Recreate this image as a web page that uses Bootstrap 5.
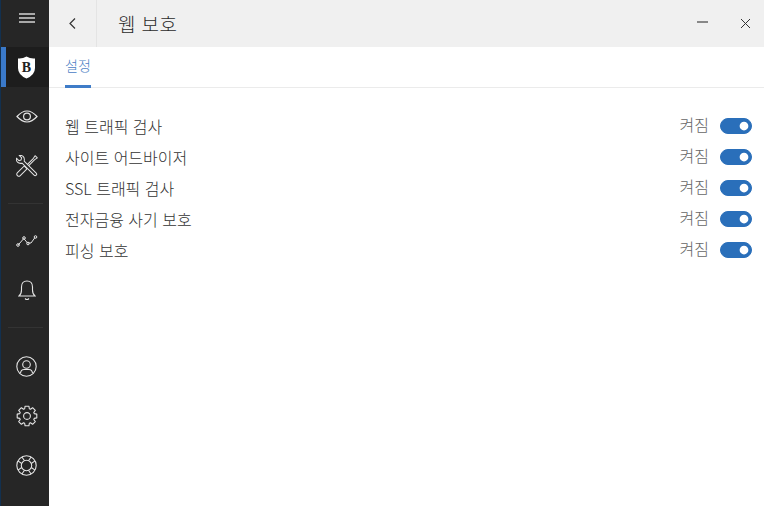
<!DOCTYPE html>
<html lang="ko">
<head>
<meta charset="utf-8">
<link href="https://cdn.jsdelivr.net/npm/bootstrap@5.3.0/dist/css/bootstrap.min.css" rel="stylesheet">
<script src="https://cdn.jsdelivr.net/npm/bootstrap@5.3.0/dist/js/bootstrap.bundle.min.js"></script>
<style>
    html, body { height: 100%; overflow: hidden; }
    body { font-family: "Noto Sans CJK KR", "Liberation Sans", sans-serif; font-weight: 300; color: #333; background: #fff; }
    .app-shell { height: 506px; }
    .side-rail { width: 49px; background: #262626; border-left: 1px solid #12304f; flex-shrink: 0; }
    .rail-item { height: 40px; color: #e4e4e4; position: relative; padding-left: 3px; flex-shrink: 0; }
    .rail-item svg { display: block; }
    .rail-top { height: 47px; padding-top: 13px; }
    .rail-active { background: #1d1d1d; }
    .rail-active::before { content: ""; position: absolute; left: 0; top: 0; bottom: 0; width: 5px; background: #3a79c9; }
    .rail-rule { height: 1px; background: #333; margin: 17px 6px 17px 7px; flex-shrink: 0; }
    .rail-rule-low { margin-bottom: 18px; }
    .gap-nine { margin-top: 9px; }
    .gap-ten { margin-top: 10px; }
    .head-bar { height: 47px; background: #f0f0f0; }
    .back-btn { width: 48px; height: 47px; border-right: 1px solid #e4e4e4; color: #333; }
    .page-title { font-size: 19px; margin-left: 21px; letter-spacing: .4px; color: #2b2b2b; line-height: 44px; }
    .win-btn { height: 47px; color: #333; }
    .win-min { width: 44px; margin-right: 3px; }
    .win-close { width: 37px; }
    .tab-strip { height: 41px; border-bottom: 1px solid #ebebeb; padding-left: 16px; }
    .tab-on { font-size: 14px; color: #4a80c4; height: 41px; width: 26px; border-bottom: 3px solid #3f7cc8; line-height: 36px; white-space: nowrap; margin-bottom: -1px; }
    .opt-list { padding: 22px 12px 0 16px; }
    .opt-row { height: 31px; font-size: 16px; color: #333; }
    .opt-state { font-size: 16px; color: #666; margin-right: 11px; margin-top: -4px; }
    .opt-row .form-check { min-height: 0; padding: 0; margin: 0; }
    .opt-row .form-check-input { width: 32px; height: 16px; margin: 0; float: none; display: block; background-color: #2a6fba; border-color: #2a6fba; box-shadow: none; }
    .opt-row .form-check-input:checked { background-image: url("data:image/svg+xml,%3csvg xmlns='http://www.w3.org/2000/svg' viewBox='-4 -4 8 8'%3e%3ccircle r='2.5' fill='%23fff'/%3e%3c/svg%3e"); }
</style>
</head>
<body>
<div class="app-shell d-flex">
    <nav class="side-rail d-flex flex-column">
        <div class="rail-item rail-top d-flex justify-content-center">
            <svg width="16" height="10" viewBox="0 0 16 10" fill="#a8a8a8"><rect y="0" width="16" height="2"/><rect y="4" width="16" height="2"/><rect y="8" width="16" height="2"/></svg>
        </div>
        <div class="rail-item rail-active d-flex align-items-center justify-content-center">
            <svg width="19" height="23" viewBox="0 0 19 23"><path d="M1 2.500 Q5.500 3 9.500 .5 Q13.500 3 18 2.500 V12 Q18 19 9.500 22.500 Q1 19 1 12 Z" fill="#fff"/><text x="9.500" y="16" text-anchor="middle" font-family="Liberation Serif" font-weight="700" font-size="14" fill="#222">B</text></svg>
        </div>
        <div class="rail-item gap-nine d-flex align-items-center justify-content-center">
            <svg width="22" height="15" viewBox="0 0 22 15" fill="none" stroke="currentColor" stroke-width="1.200"><path d="M1 7.500 Q11 -3.500 21 7.500 Q11 18.500 1 7.500 Z"/><circle cx="11" cy="7.500" r="3.400"/></svg>
        </div>
        <div class="rail-item gap-ten d-flex align-items-center justify-content-center">
            <svg width="22" height="22" viewBox="-11 -11 22 22" stroke="currentColor" stroke-width="1" stroke-linejoin="round">
                <g transform="rotate(45)" fill="none"><path d="M-.9 2 V-10 L-1.600 -13 H1.600 L.9 -10 V2"/><path d="M-2 2 H2 V11.500 A2 2 0 0 1 -2 11.500 Z"/></g>
                <g transform="rotate(-45)" fill="#262626"><path d="M-1.500 -5.500 Q-4 -7 -4 -9.500 Q-4 -11.500 -2 -13 V-9.500 L0 -8.500 L2 -9.500 V-13 Q4 -11.500 4 -9.500 Q4 -7 1.500 -5.500 V11.500 A1.500 1.500 0 0 1 -1.500 11.500 Z"/></g>
            </svg>
        </div>
        <div class="rail-rule"></div>
        <div class="rail-item d-flex align-items-center justify-content-center">
            <svg width="22" height="12" viewBox="0 0 22 12" fill="none" stroke="currentColor" stroke-width="1"><path d="M2.200 10 L7.800 3.500 L11.500 8 L15 8 L19 2.500"/><circle cx="2" cy="10" r="1.300"/><circle cx="8" cy="3" r="1.300"/><circle cx="12" cy="8.500" r="1.300"/><circle cx="19.500" cy="2" r="1.300"/></svg>
        </div>
        <div class="rail-item gap-nine d-flex align-items-center justify-content-center">
            <svg width="18" height="22" viewBox="0 0 18 22" fill="none" stroke="currentColor" stroke-width="1.100"><path d="M1 17 H17 Q14.500 15 14.500 11 V8 Q14.500 2 9 2 Q3.500 2 3.500 8 V11 Q3.500 15 1 17 Z"/><path d="M7 19.500 Q9 21.500 11 19.500"/></svg>
        </div>
        <div class="rail-rule rail-rule-low"></div>
        <div class="rail-item d-flex align-items-center justify-content-center">
            <svg width="21" height="21" viewBox="0 0 21 21" fill="none" stroke="currentColor" stroke-width="1.100"><circle cx="10.500" cy="10.500" r="9.700"/><circle cx="10.500" cy="8.500" r="3.800"/><path d="M4.500 17 Q5 13.500 8 13.500 H13 Q16 13.500 16.500 17"/></svg>
        </div>
        <div class="rail-item gap-ten d-flex align-items-center justify-content-center">
            <svg width="22" height="22" viewBox="-11 -11 22 22" fill="none" stroke="currentColor" stroke-width="1.100" stroke-linejoin="round"><path d="M-1.900 -9.800 L1.900 -9.800 L2.350 -7.230 L3.450 -6.770 L5.600 -8.300 L8.300 -5.600 L6.770 -3.450 L7.230 -2.350 L9.800 -1.900 L9.800 1.900 L7.230 2.350 L6.770 3.450 L8.300 5.600 L5.600 8.300 L3.450 6.770 L2.350 7.230 L1.900 9.800 L-1.900 9.800 L-2.350 7.230 L-3.450 6.770 L-5.600 8.300 L-8.300 5.600 L-6.770 3.450 L-7.230 2.350 L-9.800 1.900 L-9.800 -1.900 L-7.230 -2.350 L-6.770 -3.450 L-8.300 -5.600 L-5.600 -8.300 L-3.450 -6.770 L-2.350 -7.230 Z"/><circle r="3.400"/></svg>
        </div>
        <div class="rail-item gap-nine d-flex align-items-center justify-content-center">
            <svg width="21" height="21" viewBox="-10.500 -10.500 21 21" fill="none" stroke="currentColor" stroke-width="1.100"><circle r="9.700"/><circle r="5.200"/>
                <path d="M-2 -4.800 L-2.800 -9.300 M2 -4.800 L2.800 -9.300" transform="rotate(45)"/>
                <path d="M-2 -4.800 L-2.800 -9.300 M2 -4.800 L2.800 -9.300" transform="rotate(135)"/>
                <path d="M-2 -4.800 L-2.800 -9.300 M2 -4.800 L2.800 -9.300" transform="rotate(225)"/>
                <path d="M-2 -4.800 L-2.800 -9.300 M2 -4.800 L2.800 -9.300" transform="rotate(315)"/>
            </svg>
        </div>
    </nav>
    <main class="flex-grow-1">
        <header class="head-bar d-flex align-items-center">
            <div class="back-btn d-flex align-items-center justify-content-center">
                <svg width="7" height="11" viewBox="0 0 7 11" fill="none" stroke="currentColor" stroke-width="1.200"><path d="M6 .5 L1 5.500 L6 10.500"/></svg>
            </div>
            <div class="page-title flex-grow-1">웹 보호</div>
            <div class="win-btn win-min d-flex align-items-center justify-content-center">
                <svg width="11" height="11" viewBox="0 0 11 11" stroke="currentColor" stroke-width="1.100"><path d="M0 4 H11"/></svg>
            </div>
            <div class="win-btn win-close d-flex align-items-center justify-content-center">
                <svg width="11" height="11" viewBox="0 0 11 11" stroke="currentColor" stroke-width="1"><path d="M1 1 L10 10 M10 1 L1 10"/></svg>
            </div>
        </header>
        <div class="tab-strip d-flex">
            <div class="tab-on">설정</div>
        </div>
        <div class="opt-list">
            <div class="opt-row d-flex align-items-center justify-content-between">
                <span>웹 트래픽 검사</span>
                <span class="d-flex align-items-center"><span class="opt-state">켜짐</span><span class="form-check form-switch"><input class="form-check-input" type="checkbox" checked></span></span>
            </div>
            <div class="opt-row d-flex align-items-center justify-content-between">
                <span>사이트 어드바이저</span>
                <span class="d-flex align-items-center"><span class="opt-state">켜짐</span><span class="form-check form-switch"><input class="form-check-input" type="checkbox" checked></span></span>
            </div>
            <div class="opt-row d-flex align-items-center justify-content-between">
                <span>SSL 트래픽 검사</span>
                <span class="d-flex align-items-center"><span class="opt-state">켜짐</span><span class="form-check form-switch"><input class="form-check-input" type="checkbox" checked></span></span>
            </div>
            <div class="opt-row d-flex align-items-center justify-content-between">
                <span>전자금융 사기 보호</span>
                <span class="d-flex align-items-center"><span class="opt-state">켜짐</span><span class="form-check form-switch"><input class="form-check-input" type="checkbox" checked></span></span>
            </div>
            <div class="opt-row d-flex align-items-center justify-content-between">
                <span>피싱 보호</span>
                <span class="d-flex align-items-center"><span class="opt-state">켜짐</span><span class="form-check form-switch"><input class="form-check-input" type="checkbox" checked></span></span>
            </div>
        </div>
    </main>
</div>
</body>
</html>
